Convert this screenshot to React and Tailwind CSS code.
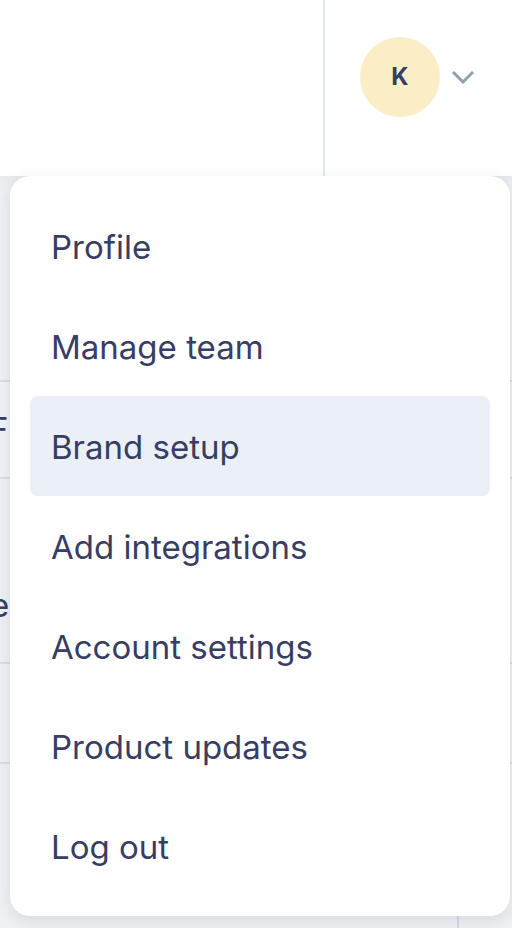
import React from "react";

const items = [
  "Profile",
  "Manage team",
  "Brand setup",
  "Add integrations",
  "Account settings",
  "Product updates",
  "Log out",
];

export default function App() {
  return (
    <div
      className="relative w-[512px] h-[928px] overflow-hidden bg-[#eff1f4]"
      style={{ fontFamily: "Inter, 'Noto Sans', sans-serif" }}
    >
      {/* header */}
      <div className="flex h-[176px] bg-white shadow-[0_4px_14px_rgba(30,40,70,0.06)] relative z-10">
        <div className="w-[325px] border-r-2 border-[#e3e8ef]" />
        <div className="flex flex-1 items-center pl-[35px] pb-[22px]">
          <div className="flex h-[80px] w-[80px] items-center justify-center rounded-full bg-[#fbedc6] text-[24px] font-bold text-[#373d64]">
            K
          </div>
          <svg
            className="ml-[12px]"
            width="22"
            height="14"
            viewBox="0 0 22 14"
            fill="none"
          >
            <path
              d="M2 3l9 9 9-9"
              stroke="#8aa3b1"
              strokeWidth="3"
              strokeLinecap="square"
            />
          </svg>
        </div>
      </div>

      {/* background content */}
      <div className="relative h-[752px] text-[33px] text-[#373d64]">
        <div className="h-[206px] border-b-2 border-[#d9dee6]" />
        <div className="flex h-[97px] items-center border-b-2 border-[#d9dee6] bg-[#f2f3f5]">
          <span className="-ml-[11px]">F</span>
        </div>
        <div className="flex h-[185px] items-start pt-[124px] leading-none border-b-2 border-[#d9dee6]">
          <span className="-ml-[10px] -mt-[14px]">e</span>
        </div>
        <div className="h-[100px] border-b-2 border-[#d9dee6]" />
        <div className="flex h-full">
          <div className="w-[457px]" />
          <div className="w-[2px] bg-[#d5dbe3]" />
        </div>
      </div>

      {/* dropdown menu */}
      <div className="absolute left-[10px] top-[176px] z-20 w-[500px] rounded-[20px] bg-white px-[20px] py-[20px] shadow-[0_4px_16px_rgba(30,40,70,0.12)]">
        {items.map((label) => (
          <div
            key={label}
            className={
              "flex h-[100px] items-center rounded-[8px] px-[21px] pt-[2px] text-[33px] leading-none text-[#373d64] " +
              (label === "Brand setup" ? "bg-[#ebf0f7]" : "")
            }
          >
            {label}
          </div>
        ))}
      </div>
    </div>
  );
}
